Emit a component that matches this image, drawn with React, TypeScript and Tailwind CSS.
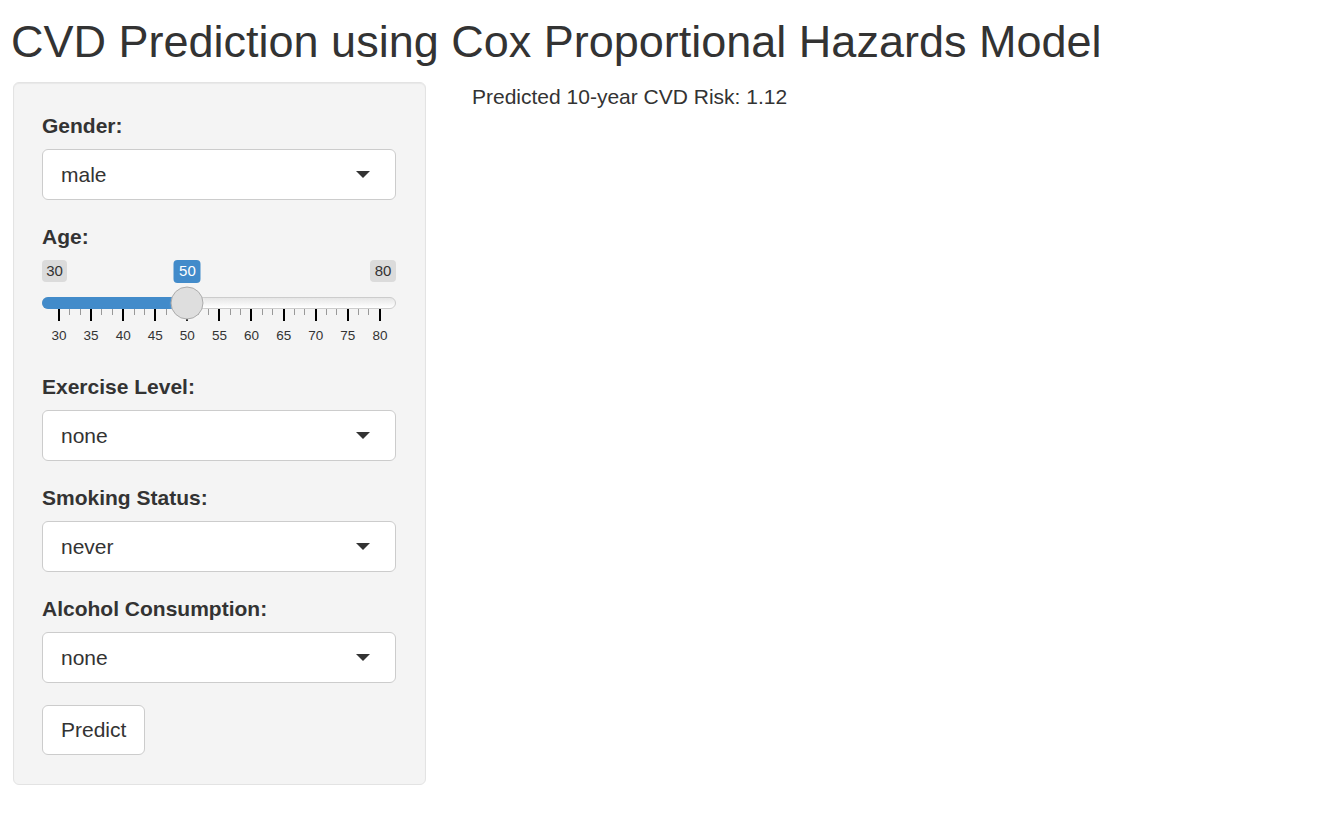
import { useState } from 'react';

const font = { fontFamily: '"Liberation Sans", Arial, Helvetica, sans-serif' };

const labels = [30, 35, 40, 45, 50, 55, 60, 65, 70, 75, 80];
// 10 intervals, each split in three -> 31 tick marks
const tickMarks = Array.from({ length: 31 }, (_, i) => i % 3 === 0);

function FakeSelect({ value }: { value: string }) {
  return (
    <div className="flex h-[51px] w-full items-center justify-between rounded-[6px] border border-[#cccccc] bg-white pl-[18px] pr-[25px] text-[21px] text-[#333333]">
      <span>{value}</span>
      <span className="h-0 w-0 border-x-[7px] border-t-[7px] border-x-transparent border-t-[#333333]" />
    </div>
  );
}

function Field({ label, children }: { label: string; children: React.ReactNode }) {
  return (
    <div className="flex flex-col gap-[8px]">
      <div className="text-[21px] font-bold leading-[30px] text-[#333333]">{label}</div>
      {children}
    </div>
  );
}

function AgeSlider({ value, min, max }: { value: number; min: number; max: number }) {
  // handle centre runs from 17px to 338px inside the 355px wide slider
  const pos = 17 + ((value - min) / (max - min)) * 321;
  return (
    <div className="flex w-full flex-col pt-[8px]">
      {/* min / value / max badges */}
      <div className="relative flex h-[22px] justify-between">
        <div className="flex w-[25px] items-center justify-center rounded-[4px] bg-black/10 text-[15px] text-[#333333]">{min}</div>
        <div className="flex w-[26px] items-center justify-center rounded-[4px] bg-black/10 text-[15px] text-[#333333]">{max}</div>
        <div
          className="absolute top-0 flex h-[23px] w-[27px] -translate-x-1/2 items-center justify-center rounded-[4px] bg-[#428bca] text-[15px] text-white"
          style={{ left: pos }}
        >
          {value}
        </div>
      </div>

      {/* track with handle */}
      <div className="relative mt-[15px] h-[12px] rounded-full border border-[#cccccc] bg-gradient-to-b from-[#e6e6e6] to-white">
        <div className="absolute -left-px -top-px h-[12px] rounded-l-full bg-[#428bca]" style={{ width: pos }} />
        <div
          className="absolute top-1/2 h-[33px] w-[33px] -translate-x-1/2 -translate-y-1/2 rounded-full border border-[#ababab] bg-[#dedede] shadow-[1px_1px_3px_rgba(255,255,255,0.3)]"
          style={{ left: pos - 1 }}
        />
      </div>

      {/* grid ticks */}
      <div className="flex h-[12px] w-[323px] items-start justify-between pl-[16px] box-content">
        {tickMarks.map((major, i) =>
          major ? (
            <div key={i} className="h-[12px] w-[2px] bg-black" />
          ) : (
            <div key={i} className="h-[6px] w-[1px] bg-[#999999]" />
          )
        )}
      </div>

      {/* grid labels */}
      <div className="mt-[6px] flex w-[321px] justify-between pl-[17px] box-content">
        {labels.map((l) => (
          <div key={l} className="flex w-0 justify-center text-[13.5px] leading-[18px] text-[#333333]">
            {l}
          </div>
        ))}
      </div>
    </div>
  );
}

export default function App() {
  const [risk] = useState('1.12');

  return (
    <div className="min-h-screen bg-white pl-[13px] text-[#333333]" style={font}>
      <h2 className="ml-[-2px] pt-[17px] text-[45px] font-normal leading-[49.5px] text-[#333333]">
        CVD Prediction using Cox Proportional Hazards Model
      </h2>

      <div className="mt-[15.5px] flex items-start gap-[46px]">
        <div className="flex w-[413px] flex-col gap-[22px] rounded-[6px] border border-[#e3e3e3] bg-[#f4f4f4] pb-[29px] pl-[28px] pr-[29px] pt-[28px] shadow-[inset_0_1px_1px_rgba(0,0,0,0.05)]">
          <Field label="Gender:">
            <FakeSelect value="male" />
          </Field>

          <div className="flex h-[128px] flex-col">
            <div className="text-[21px] font-bold leading-[30px] text-[#333333]">Age:</div>
            <AgeSlider value={50} min={30} max={80} />
          </div>

          <Field label="Exercise Level:">
            <FakeSelect value="none" />
          </Field>

          <Field label="Smoking Status:">
            <FakeSelect value="never" />
          </Field>

          <Field label="Alcohol Consumption:">
            <FakeSelect value="none" />
          </Field>

          <div>
            <button className="h-[50px] rounded-[6px] border border-[#cccccc] bg-white px-[18px] text-[21px] text-[#333333]">
              Predict
            </button>
          </div>
        </div>

        <div className="text-[21px] leading-[30px] text-[#333333]">Predicted 10-year CVD Risk: {risk}</div>
      </div>
    </div>
  );
}
